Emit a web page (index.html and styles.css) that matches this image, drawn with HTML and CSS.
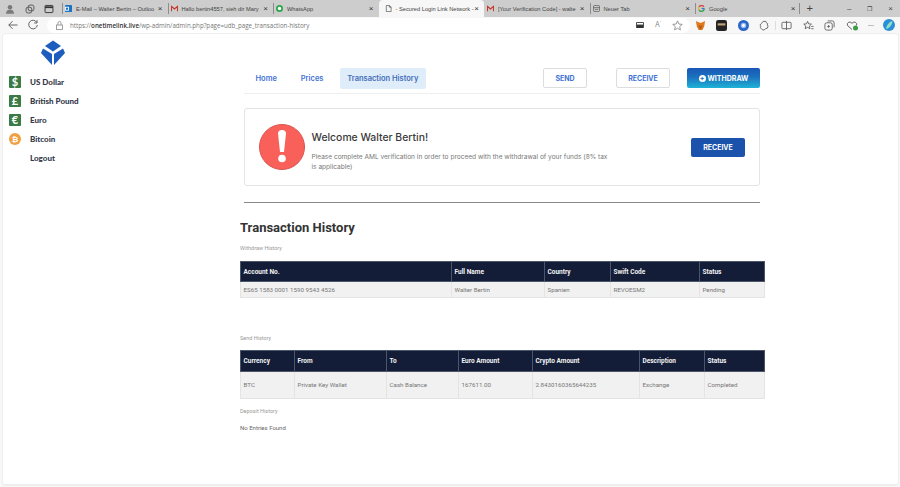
FILE: index.html
```html
<!DOCTYPE html>
<html lang="en">
<head>
  <meta charset="UTF-8" />
  <title>Transaction History</title>
  <link rel="stylesheet" href="styles.css">
</head>
<body>
  <div class="tabbar">
    <div class="win-icons">
      <svg width="10" height="10" viewBox="0 0 14 14"><circle cx="7" cy="4.5" r="3.2" fill="#7a7a7a"/><path d="M1.500 13.500c0-4.500 2.500-5.500 5.500-5.500s5.500 1 5.500 5.500z" fill="#7a7a7a"/></svg>
      <svg width="10" height="10" viewBox="0 0 14 14" fill="none" stroke="#555" stroke-width="1.300"><rect x="4.500" y="1.500" width="8" height="8" rx="2.500"/><rect x="1.500" y="4.500" width="8" height="8" rx="2.500"/></svg>
      <svg width="10" height="10" viewBox="0 0 14 14" fill="none" stroke="#333" stroke-width="1.300"><rect x="1.500" y="2" width="11" height="10" rx="1"/><path d="M1.500 4.500h11" stroke-width="2.500"/></svg>
    </div>
    <div class="tab"><svg class="fav" viewBox="0 0 8 8"><rect width="8" height="8" rx="1" fill="#1a73c4"/><rect x="0" y="2" width="4.500" height="4.500" fill="#fff"/><rect x="1" y="3" width="2.500" height="2.500" fill="#1a73c4"/></svg><span class="tab-title">E-Mail – Walter Bertin – Outloo</span><span class="tab-x">×</span></div>
    <div class="tab"><svg class="fav" viewBox="0 0 8 8"><path d="M.5 7V1.500L4 4.500l3.500-3V7" fill="none" stroke="#c5362b" stroke-width="1.400"/></svg><span class="tab-title">Hallo bertin4557, sieh dir Mary</span><span class="tab-x">×</span></div>
    <div class="tab"><svg class="fav" viewBox="0 0 8 8"><circle cx="4" cy="4" r="4" fill="#2aa64b"/><circle cx="4" cy="4" r="2" fill="#fff"/></svg><span class="tab-title">WhatsApp</span><span class="tab-x">×</span></div>
    <div class="tab tab-active"><svg class="fav" viewBox="0 0 8 8" fill="none" stroke="#555" stroke-width=".8"><path d="M1.500.5h3.500l2 2v5h-5.500zM5 .5v2h2"/></svg><span class="tab-title">- Secured Login Link Network -</span><span class="tab-x">×</span></div>
    <div class="tab"><svg class="fav" viewBox="0 0 8 8"><path d="M.5 7V1.500L4 4.500l3.500-3V7" fill="none" stroke="#c5362b" stroke-width="1.400"/></svg><span class="tab-title">[Your Verification Code] - walte</span><span class="tab-x">×</span></div>
    <div class="tab"><svg class="fav" viewBox="0 0 8 8" fill="none" stroke="#555" stroke-width=".8"><rect x=".5" y=".5" width="7" height="7" rx="1.500"/><path d="M.5 3h7M2 5h4"/></svg><span class="tab-title">Neuer Tab</span><span class="tab-x">×</span></div>
    <div class="tab"><svg class="fav" viewBox="0 0 8 8" fill="none" stroke-width="1.500"><path d="M6.800 2A3.300 3.300 0 0 0 1.200 2.200" stroke="#d9453a"/><path d="M1.200 2.200a3.300 3.300 0 0 0 0 3.600" stroke="#e8b32c"/><path d="M1.200 5.800a3.300 3.300 0 0 0 6-1.800" stroke="#2f9e4f"/><path d="M4 4h3.300" stroke="#3c78d8"/></svg><span class="tab-title">Google</span><span class="tab-x">×</span></div>
    <span class="new-tab">+</span>
    <div class="win-controls"><span>–</span><span class="win-restore">❐</span><span>×</span></div>
  </div>

  <div class="toolbar">
    <svg class="tool-ic" width="12" height="12" viewBox="0 0 12 12" fill="none" stroke="#555" stroke-width=".9"><path d="M10.500 6H1.800M5.500 2.200 1.800 6l3.700 3.800"/></svg>
    <svg class="tool-ic" width="12" height="12" viewBox="0 0 12 12" fill="none" stroke="#555" stroke-width=".9"><path d="M9.800 3.500A4.300 4.300 0 1 0 10.300 6M10 1.200v2.800H7.200"/></svg>
    <div class="address">
      <svg width="9" height="9" viewBox="0 0 9 9" fill="none" stroke="#888" stroke-width=".8"><rect x="1.500" y="4" width="6" height="4.500"/><path d="M3 4V2a1.500 1.500 0 0 1 3 0v2"/></svg>
      <span class="url">https://<b>onetimelink.live</b>/wp-admin/admin.php?page=udb_page_transaction-history</span>
      <span class="address-tools">
        <svg width="8" height="6" viewBox="0 0 9 7"><rect width="9" height="7" rx="1" fill="#333"/><rect x="1" y="1" width="7" height="2" fill="#fff"/></svg>
        <span class="read">A<sup>ʼ</sup></span>
        <svg width="11" height="11" viewBox="0 0 12 12" fill="none" stroke="#777" stroke-width=".8"><path d="m6 1 1.500 3.400 3.700.4-2.800 2.400.8 3.600L6 9l-3.200 1.800.8-3.600L.8 4.800l3.700-.4z"/></svg>
      </span>
    </div>
    <div class="extensions">
      <svg width="11" height="11" viewBox="0 0 12 12"><path d="M1 1l4 2h2l4-2-1 6-2 4H4L2 7z" fill="#e2761b"/><path d="M4 6h1.500L6 8 6.500 6H8L6.500 10h-1z" fill="#a85a1a"/></svg>
      <svg width="11" height="11" viewBox="0 0 10 10"><rect width="10" height="10" rx="2" fill="#222"/><rect x="1.500" y="3" width="7" height="2" fill="#bfa27a"/></svg>
      <svg width="11" height="11" viewBox="0 0 10 10"><circle cx="5" cy="5" r="5" fill="#2b66c9"/><circle cx="5" cy="5" r="2.500" fill="#9ec0f0"/><circle cx="5" cy="5" r="1.300" fill="#fff"/></svg>
      <svg width="11" height="11" viewBox="0 0 12 12" fill="none" stroke="#555" stroke-width=".9"><path d="M4.500 1.500h3l.5 1.500 1.500 1-.5 1.500 1 1-1 2.500-2 .5-1.500 1.500-2-.5-2-2 .5-1.500-1-1.500 1.500-1.500z"/></svg>
      <i class="tool-sep"></i>
      <svg width="11" height="11" viewBox="0 0 12 12" fill="none" stroke="#555" stroke-width=".9"><rect x="1" y="2.500" width="10" height="7" rx="1"/><path d="M6 1v10"/></svg>
      <svg width="11" height="11" viewBox="0 0 12 12" fill="none" stroke="#555" stroke-width=".9"><path d="m5 1.500 1.200 2.700 3 .3-2.200 2 .6 3L5 8 2.400 9.500l.6-3-2.200-2 3-.3zM9 7h2.500M9 9.500h2.500"/></svg>
      <svg width="11" height="11" viewBox="0 0 12 12" fill="none" stroke="#555" stroke-width=".9"><rect x="1" y="3" width="8" height="8" rx="2"/><path d="M4 1h5a2 2 0 0 1 2 2v5"/><path d="M3.500 7h3M5 5.500v3"/></svg>
      <svg width="12" height="11" viewBox="0 0 12 11" fill="none" stroke="#555" stroke-width=".9"><path d="M6 9.500 1.500 5.500a2.400 2.400 0 0 1 4.500-2 2.400 2.400 0 0 1 4.500 2"/><circle cx="9.500" cy="8" r="2.500" fill="#3a9b48" stroke="none"/></svg>
      <span class="dots">···</span>
      <svg class="copilot" width="12" height="12" viewBox="0 0 12 12"><circle cx="6" cy="6" r="6" fill="#2b8fd8"/><path d="M3 10c.5-4 3-7 6.500-8-.5 4-2.500 7-6.500 8z" fill="#8fe0c8"/></svg>
    </div>
  </div>

  <div class="page">
    <aside class="sidebar">
      <svg class="logo" width="26" height="26" viewBox="0 0 26 26" fill="#1c5dbd"><path d="M13 .5 21 6l-8 5.500L5 6z"/><path d="M3 8.500l9 5.500v11L1 13z"/><path d="M23 8.500 14 14v11l11-12z"/></svg>
      <nav class="side-menu">
        <a class="side-item"><span class="cur cur-green">$</span>US Dollar</a>
        <a class="side-item"><span class="cur cur-green">£</span>British Pound</a>
        <a class="side-item"><span class="cur cur-green">€</span>Euro</a>
        <a class="side-item"><span class="cur cur-btc">₿</span>Bitcoin</a>
        <a class="side-item"><span class="cur"></span>Logout</a>
      </nav>
    </aside>

    <main class="content">
      <header class="topnav">
        <a class="nav-link">Home</a>
        <a class="nav-link">Prices</a>
        <a class="nav-link nav-active">Transaction History</a>
        <div class="nav-actions">
          <a class="btn btn-send">SEND</a>
          <a class="btn btn-receive">RECEIVE</a>
          <a class="btn btn-withdraw"><span class="plus">+</span>WITHDRAW</a>
        </div>
      </header>

      <section class="welcome">
        <svg class="alert" width="46" height="46" viewBox="0 0 46 46"><circle cx="23" cy="23" r="22.500" fill="#f9605a" stroke="#d9534f"/><path d="M19 9.500a4 3.500 0 0 1 8 0L25 28h-4z" fill="#fff"/><circle cx="23" cy="34.500" r="3.800" fill="#fff"/></svg>
        <div class="welcome-text">
          <h2>Welcome Walter Bertin!</h2>
          <p>Please complete AML verification in order to proceed with the withdrawal of your funds (8% tax is applicable)</p>
        </div>
        <a class="btn-solid">RECEIVE</a>
      </section>

      <hr class="rule">

      <h1>Transaction History</h1>

      <p class="table-label first">Withdraw History</p>
      <table class="history withdraw">
        <thead>
          <tr><th class="w-acc">Account No.</th><th class="w-name">Full Name</th><th class="w-country">Country</th><th class="w-swift">Swift Code</th><th>Status</th></tr>
        </thead>
        <tbody>
          <tr><td>ES65 1583 0001 1590 9543 4526</td><td>Walter Bertin</td><td>Spanien</td><td>REVOESM2</td><td>Pending</td></tr>
        </tbody>
      </table>

      <p class="table-label send-label">Send History</p>
      <table class="history send">
        <thead>
          <tr><th class="s-cur">Currency</th><th class="s-from">From</th><th class="s-to">To</th><th class="s-euro">Euro Amount</th><th class="s-crypto">Crypto Amount</th><th class="s-desc">Description</th><th>Status</th></tr>
        </thead>
        <tbody>
          <tr><td>BTC</td><td>Private Key Wallet</td><td>Cash Balance</td><td>167611.00</td><td>2.8430160365644235</td><td>Exchange</td><td>Completed</td></tr>
        </tbody>
      </table>

      <p class="table-label deposit-label">Deposit History</p>
      <p class="no-entries">No Entries Found</p>
    </main>
  </div>
</body>
</html>
```

FILE: styles.css
```css
* {
  box-sizing: border-box;
}
html, body {
  margin: 0;
  height: 487px;
  overflow: hidden;
}
body {
  font-family: "Inter", "Liberation Sans", sans-serif;
  background: #f7f7f7;
  color: #333;
}
a {
  text-decoration: none;
}

/* browser chrome */
.tabbar {
  display: flex;
  align-items: center;
  height: 17px;
  background: #cdcdcd;
  font-family: "Liberation Sans", sans-serif;
  font-size: 5.700px;
  color: #444;
}
.win-icons {
  flex: none;
  display: flex;
  align-items: center;
  gap: 9.500px;
  padding-left: 5px;
  width: 62px;
}
.tab {
  flex: none;
  display: flex;
  align-items: center;
  width: 105.500px;
  height: 17px;
  padding: 0 5px 0 3px;
  white-space: nowrap;
  position: relative;
}
.tab::before {
  content: "";
  position: absolute;
  left: 0;
  top: 3px;
  bottom: 3px;
  width: 1px;
  background: #8d8d8d;
}
.tab-active {
  background: #f7f7f7;
  border-radius: 4px 4px 0 0;
  padding-left: 6px;
}
.tab-active::before,
.tab-active + .tab::before {
  display: none;
}
.tab-title {
  flex: 1;
  padding-left: 4px;
}
.tab-x {
  font-size: 8px;
  line-height: 8px;
  color: #333;
}
.fav {
  flex: none;
  width: 7px;
  height: 7px;
}
.new-tab {
  border-left: 1px solid #8d8d8d;
  margin-left: -2px;
  padding-left: 7px;
  font-size: 11px;
  line-height: 11px;
  color: #444;
}
.win-controls {
  display: flex;
  align-items: center;
  gap: 16px;
  margin-left: auto;
  padding-right: 7px;
  font-size: 8px;
  color: #444;
}
.win-restore {
  font-size: 6px;
}

.toolbar {
  display: flex;
  align-items: center;
  height: 16px;
  background: #f7f7f7;
  padding-left: 7px;
}
.tool-ic {
  flex: none;
  margin-right: 8px;
}
.address {
  flex: none;
  display: flex;
  align-items: center;
  width: 643px;
  height: 15px;
  padding: 0 7px 0 8px;
  background: #fff;
  border-radius: 8px;
}
.url {
  padding-left: 6px;
  font-family: "Open Sans", "Liberation Sans", sans-serif;
  font-size: 6.200px;
  color: #777;
}
.url b {
  color: #333;
  font-weight: 600;
}
.address-tools {
  display: flex;
  align-items: center;
  gap: 11px;
  margin-left: auto;
}
.read {
  font-size: 7px;
  color: #888;
}
.read sup {
  font-size: 4px;
}
.extensions {
  flex: none;
  display: flex;
  align-items: center;
  gap: 10.500px;
  margin-left: 4.500px;
}
.tool-sep {
  width: 1px;
  height: 9px;
  margin: 0 -5.500px;
  background: #ddd;
}
.dots {
  font-size: 7px;
  color: #555;
}
.copilot {
  margin-left: -2px;
}

/* page */
.page {
  display: flex;
  height: 453px;
  margin: 0 1px 0 2px;
  background: #fff;
  border: 1px solid #eee;
  border-bottom-width: 2px;
  border-radius: 4px;
}
.sidebar {
  flex: none;
  width: 237px;
  padding-top: 6px;
}
.logo {
  display: block;
  margin-left: 37px;
}
.side-menu {
  display: flex;
  flex-direction: column;
  gap: 5px;
  margin-top: 8.500px;
}
.side-item {
  display: flex;
  align-items: center;
  height: 14px;
  padding-left: 6px;
  font-family: "Lato", "Liberation Sans", sans-serif;
  font-size: 8px;
  font-weight: 900;
  color: #343a4a;
}
.cur {
  flex: none;
  display: flex;
  align-items: center;
  justify-content: center;
  width: 12px;
  height: 12px;
  margin-right: 9px;
  font-size: 11px;
  font-weight: 700;
  color: #fff;
}
.cur-green {
  background: #3a7a45;
  border-radius: 1px;
}
.cur-btc {
  background: #f0a040;
  border-radius: 50%;
  font-size: 8px;
}

.content {
  width: 525px;
  padding-top: 32px;
}
.topnav {
  display: flex;
  align-items: center;
  height: 27px;
  margin-left: 4px;
  width: 516px;
  padding-bottom: 3px;
  font-size: 7.500px;
  font-weight: 600;
  box-shadow: 0 1px 0 #eee;
}
.nav-link {
  padding: 7px 7.500px;
  margin-right: 8.800px;
  color: #3f73d6;
  border-radius: 2px;
  line-height: 7px;
}
.nav-link:first-child {
  margin-left: 4px;
}
.nav-active {
  background: #dfecfa;
  color: #3f6fb8;
  height: 21px;
  padding-top: 7px;
}
.nav-actions {
  display: flex;
  align-items: center;
  margin-left: auto;
}
.btn {
  display: flex;
  align-items: center;
  justify-content: center;
  height: 20px;
  border: 1px solid #ddd;
  border-radius: 2px;
  background: #fff;
  color: #3f73d6;
  font-size: 7px;
  font-weight: 700;
}
.btn-send {
  width: 44px;
}
.btn-receive {
  width: 54px;
  margin-left: 29px;
}
.btn-withdraw {
  width: 73px;
  margin-left: 17px;
  border: none;
  background: linear-gradient(#1957b5 0%, #1b72bf 45%, #1fb3d6 100%);
  color: #fff;
}
.plus {
  display: inline-flex;
  align-items: center;
  justify-content: center;
  width: 7px;
  height: 7px;
  margin-right: 2px;
  border-radius: 50%;
  background: #fff;
  color: #1b66bc;
  font-size: 7px;
  line-height: 7px;
}

.welcome {
  display: flex;
  align-items: center;
  width: 516px;
  height: 78px;
  margin: 15px 0 0 4px;
  padding: 0 14px 0 14px;
  border: 1px solid #e4e4e4;
  border-radius: 3px;
}
.alert {
  flex: none;
}
.welcome-text {
  width: 300px;
  margin-left: 6.500px;
  padding-top: 9px;
}
.welcome h2 {
  margin: 0 0 7px;
  font-size: 10.400px;
  line-height: 14px;
  font-weight: 500;
  color: #3a3a3a;
}
.welcome p {
  margin: 0;
  font-size: 6.550px;
  line-height: 10px;
  color: #777;
}
.btn-solid {
  display: flex;
  align-items: center;
  justify-content: center;
  width: 54px;
  height: 19px;
  margin-left: auto;
  background: #1a52ac;
  border-radius: 2px;
  color: #fff;
  font-size: 7px;
  font-weight: 700;
}
.rule {
  width: 516px;
  margin: 16px 0 0 4px;
  border: none;
  border-top: 1px solid #8a8a8a;
}

h1 {
  margin: 16px 0 0;
  font-family: "Roboto", "Liberation Sans", sans-serif;
  font-size: 13px;
  line-height: 18px;
  font-weight: 700;
  color: #333;
}
.table-label {
  margin: 0;
  font-family: "Roboto", "Liberation Sans", sans-serif;
  font-size: 5.500px;
  line-height: 8px;
  color: #999;
}
.first {
  margin-top: 7px;
}
.send-label {
  margin-top: 36px;
}
.deposit-label {
  margin-top: 8px;
}
.no-entries {
  margin: 9px 0 0;
  font-family: "Roboto", "Liberation Sans", sans-serif;
  font-size: 6px;
  line-height: 8px;
  color: #666;
}

.history {
  width: 525px;
  margin-top: 8px;
  table-layout: fixed;
  border-collapse: collapse;
  font-family: "Roboto", "Liberation Sans", sans-serif;
  font-size: 6.200px;
  color: #777;
}
.withdraw {
  margin-top: 9px;
}
.history th {
  padding: 0 2.500px;
  background: #141d38;
  border: 1px solid #4d5568;
  font-size: 6.500px;
  color: #f2f2f2;
  font-weight: 700;
  text-align: left;
}
.history td {
  padding: 0 2.500px;
  background: #f1f1f1;
  border: 1px solid #e4e4e4;
}
.withdraw th {
  height: 20px;
}
.withdraw td {
  height: 16px;
}
.send th {
  height: 21px;
}
.send td {
  height: 27px;
}
.w-acc { width: 211px; }
.w-name { width: 93px; }
.w-country { width: 66px; }
.w-swift { width: 89px; }
.s-cur { width: 54px; }
.s-from { width: 92px; }
.s-to { width: 72px; }
.s-euro { width: 74px; }
.s-crypto { width: 107px; }
.s-desc { width: 65px; }
```
